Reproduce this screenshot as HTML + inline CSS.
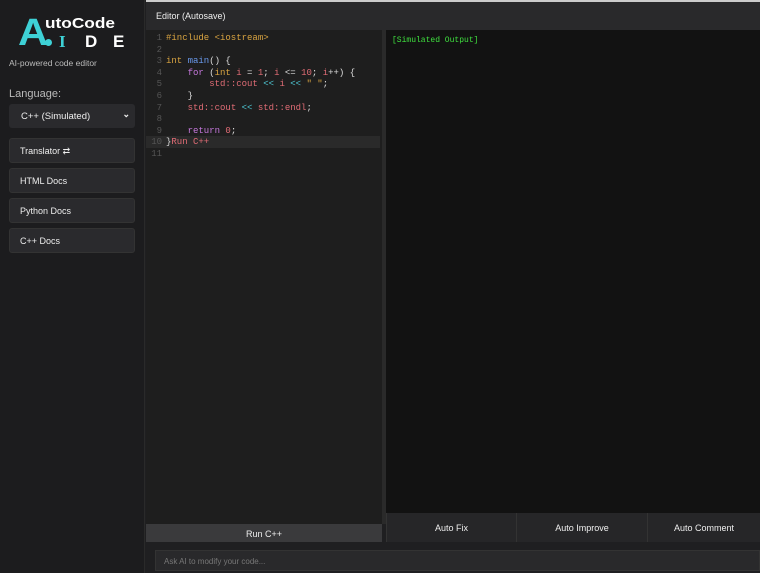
<!DOCTYPE html>
<html><head><style>
*{margin:0;padding:0;box-sizing:border-box}
body{width:760px;height:573px;background:#1f1f21;font-family:"Liberation Sans",sans-serif;position:relative;overflow:hidden;color:#ddd}
.sb{position:absolute;left:0;top:0;width:145px;height:573px;background:#1c1c1e;border-right:1px solid #2a2a2a}
.A{position:absolute;left:18px;top:14px;font-size:38px;font-weight:bold;color:#3ed1d6;line-height:38px;transform:scaleX(1.1);transform-origin:left}
.ac{position:absolute;left:45px;top:16px;font-size:15px;line-height:15px;font-weight:bold;color:#fff;white-space:nowrap;transform:scaleX(1.15);transform-origin:left}
.dot{position:absolute;left:45px;top:39px;width:7px;height:7px;border-radius:50%;background:#3ed1d6}
.ide{position:absolute;top:33px;font-size:17px;line-height:17px;font-weight:bold;white-space:nowrap}
.sub{position:absolute;left:9px;top:58px;font-size:8.5px;color:#bbb}
.lang{position:absolute;left:9px;top:88px;font-size:11px;color:#bbb}
.sel{position:absolute;left:9px;top:104px;width:126px;height:24px;background:#2a2a2d;border-radius:3px;font-size:9.5px;color:#eee;padding:7px 0 0 12px}
.sel span{position:absolute;right:5px;top:5px;font-size:9px;font-weight:bold}
.btn{position:absolute;left:9px;width:126px;height:25px;background:#2a2a2d;border:1px solid #333;border-radius:3px;font-size:9px;color:#eee;padding:7px 0 0 10px}
.hdr{position:absolute;left:146px;top:0;width:614px;height:30px;background:#29292b;border-top:2px solid #ccc;font-size:9px;color:#eee;padding:9px 0 0 10px}
.ed{position:absolute;left:146px;top:30px;width:236px;height:494px;background:#1e1e1e;font-family:"Liberation Mono",monospace;font-size:9px}
.ln{position:absolute;left:0;width:16px;text-align:right;color:#555;line-height:11.6px;top:3px}
.cd{position:absolute;left:20px;white-space:pre;color:#ddd;line-height:11.6px;top:3px}
.cur{position:absolute;left:0;top:106px;width:234px;height:12px;background:#2a2a2a}
.out{position:absolute;left:386px;top:30px;width:374px;height:483px;background:#121212;font-family:"Liberation Mono",monospace;font-size:8px;color:#3fe03f;padding:6px 6px}
.gap{position:absolute;left:382px;top:30px;width:4px;height:494px;background:#2a2a2a}
.run{position:absolute;left:146px;top:524px;width:236px;height:18px;background:#3a3a3c;font-size:9px;color:#eee;text-align:center;padding-top:5px}
.ab{position:absolute;top:513px;height:29px;background:#262628;font-size:9px;color:#eee;text-align:center;padding-top:10px;border-left:1px solid #333}
.inp{position:absolute;left:155px;top:550px;width:605px;height:21px;background:#29292b;border:1px solid #333;font-size:8px;color:#777;padding:6px 8px}
.k{color:#d9a441}.b{color:#6a9bef}.p{color:#c678dd}.r{color:#e06c75}.c{color:#4ec9d6}
</style></head><body>
<div class="sb">
<div class="A">A</div><div class="ac">utoCode</div>
<div class="dot"></div>
<div class="ide" style="left:59px;color:#3ed1d6;font-family:'Liberation Serif',serif">I</div>
<div class="ide" style="left:85px;color:#fff">D</div>
<div class="ide" style="left:113px;color:#fff">E</div>
<div class="sub">AI-powered code editor</div>
<div class="lang">Language:</div>
<div class="sel">C++ (Simulated)<span>&#8964;</span></div>
<div class="btn" style="top:138px">Translator &#8644;</div>
<div class="btn" style="top:168px">HTML Docs</div>
<div class="btn" style="top:198px">Python Docs</div>
<div class="btn" style="top:228px">C++ Docs</div>
</div>
<div class="hdr">Editor (Autosave)</div>
<div class="ed">
<div class="cur"></div>
<div class="cd"><span class="k">#include &lt;iostream&gt;</span>

<span class="k">int</span> <span class="b">main</span>() {
    <span class="p">for</span> (<span class="k">int</span> <span class="r">i</span> = <span class="r">1</span>; <span class="r">i</span> &lt;= <span class="r">10</span>; <span class="r">i</span>++) {
        <span class="r">std::cout</span> <span class="c">&lt;&lt;</span> <span class="r">i</span> <span class="c">&lt;&lt;</span> <span class="k">" "</span>;
    }
    <span class="r">std::cout</span> <span class="c">&lt;&lt;</span> <span class="r">std::endl</span>;

    <span class="p">return</span> <span class="r">0</span>;
}<span class="r">Run C++</span>
</div>
<div class="ln">1<br>2<br>3<br>4<br>5<br>6<br>7<br>8<br>9<br>10<br>11</div>
</div>
<div class="gap"></div>
<div class="out">[Simulated Output]</div>
<div class="run">Run C++</div>
<div class="ab" style="left:386px;width:130px">Auto Fix</div>
<div class="ab" style="left:516px;width:131px">Auto Improve</div>
<div class="ab" style="left:647px;width:113px">Auto Comment</div>
<div class="inp">Ask AI to modify your code...</div>
</body></html>
